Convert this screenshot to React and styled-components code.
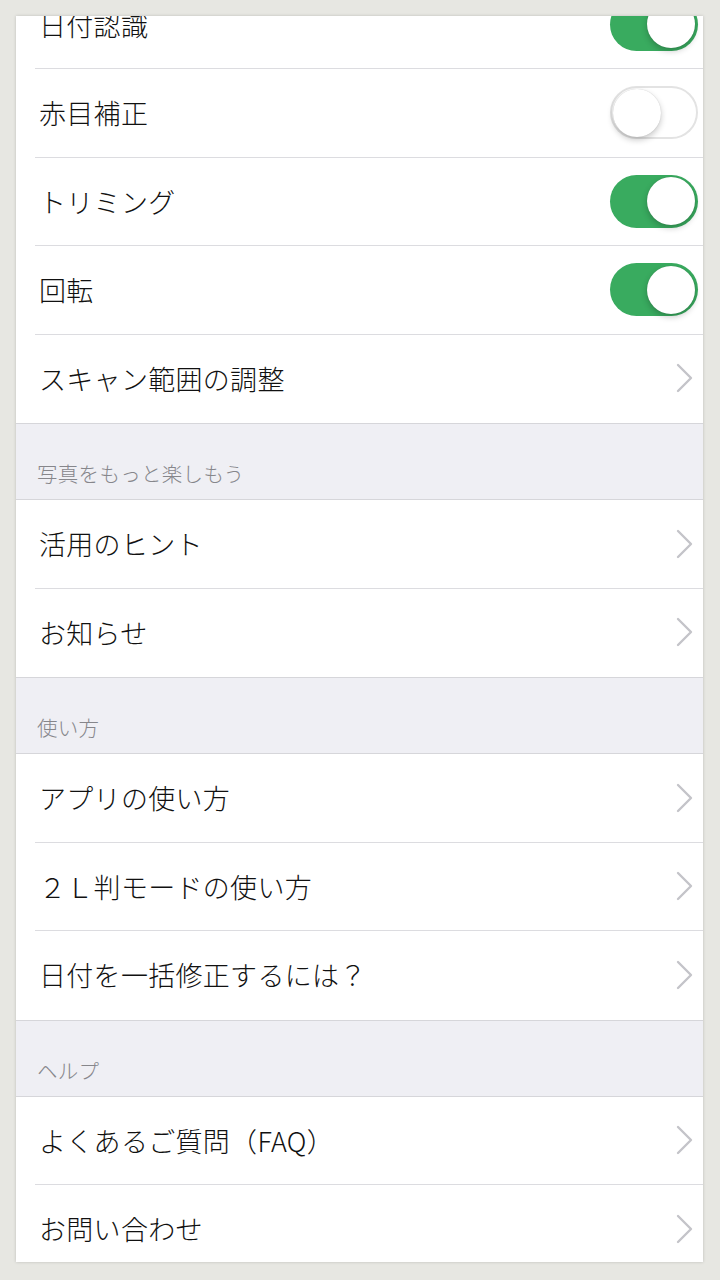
import styled, { createGlobalStyle } from "styled-components";

const GlobalStyle = createGlobalStyle`
    html, body {
        margin: 0;
        padding: 0;
        background: #e7e7e2;
    }
    body {
        font-family: "Noto Sans CJK JP", "Noto Sans", sans-serif;
        -webkit-font-smoothing: antialiased;
    }
`;

const Frame = styled.div`
    box-sizing: border-box;
    width: 720px;
    height: 1280px;
    padding: 16px 17px 18px 16px;
`;

const Panel = styled.div`
    height: 100%;
    overflow: hidden;
    background: #ffffff;
    box-shadow: 0 0 3px rgba(0, 0, 0, 0.18);
`;

const List = styled.div`
    margin-top: -35.5px;
    display: flex;
    flex-direction: column;
`;

const SectionHeader = styled.div`
    box-sizing: border-box;
    height: 77px;
    display: flex;
    align-items: flex-end;
    padding: 0 0 11px 21px;
    background: #efeff4;
    border-top: 1px solid #d6d6da;
    border-bottom: 1px solid #d6d6da;
    color: #86868b;
    font-size: 20.5px;
    font-weight: 300;
    letter-spacing: 0.3px;
`;

const Row = styled.div`
    display: flex;
    padding-left: 19px;
    background: #ffffff;
`;

const RowInner = styled.div`
    box-sizing: border-box;
    flex: 1;
    height: 88.5px;
    display: flex;
    align-items: center;
    justify-content: space-between;
    padding: 0 5px 0 4px;
    border-bottom: 1px solid ${(p) => (p.$last ? "transparent" : "#dcdce0")};
`;

const Label = styled.span`
    font-size: 27px;
    font-weight: 300;
    color: #111111;
    letter-spacing: 0.3px;
`;

const Track = styled.div`
    box-sizing: border-box;
    width: 88px;
    height: 53px;
    border-radius: 27px;
    padding: 2px 3px;
    display: flex;
    align-items: center;
    justify-content: ${(p) => (p.$on ? "flex-end" : "flex-start")};
    background: ${(p) => (p.$on ? "#39ab5f" : "#ffffff")};
    box-shadow: ${(p) => (p.$on ? "none" : "inset 0 0 0 2px #e3e3e3")};
`;

const Knob = styled.div`
    width: 48px;
    height: 48px;
    border-radius: 50%;
    background: #ffffff;
    box-shadow: 0 3px 6px rgba(0, 0, 0, 0.22), 0 0 1px rgba(0, 0, 0, 0.2);
`;

const ChevronBox = styled.svg`
    width: 17px;
    height: 30px;
    margin-right: 5px;
`;

function Toggle({ on })
{
    return (
        <Track $on={on}>
            <Knob />
        </Track>
    );
}

function Chevron()
{
    return (
        <ChevronBox viewBox="0 0 17 30">
            <polyline
                points="2,2 15,15 2,28"
                fill="none"
                stroke="#c4c4c9"
                strokeWidth="2.4"
                strokeLinecap="round"
                strokeLinejoin="round"
            />
        </ChevronBox>
    );
}

const sections = [
    {
        title: null,
        rows: [
            { label: "日付認識", toggle: true },
            { label: "赤目補正", toggle: false },
            { label: "トリミング", toggle: true },
            { label: "回転", toggle: true },
            { label: "スキャン範囲の調整" },
        ],
    },
    {
        title: "写真をもっと楽しもう",
        rows: [{ label: "活用のヒント" }, { label: "お知らせ" }],
    },
    {
        title: "使い方",
        rows: [
            { label: "アプリの使い方" },
            { label: "２Ｌ判モードの使い方" },
            { label: "日付を一括修正するには？" },
        ],
    },
    {
        title: "ヘルプ",
        rows: [{ label: "よくあるご質問（FAQ）" }, { label: "お問い合わせ" }],
    },
];

export default function App()
{
    return (
        <>
            <GlobalStyle />
            <Frame>
                <Panel>
                    <List>
                        {sections.map((section, si) => (
                            <div key={si}>
                                {section.title && <SectionHeader>{section.title}</SectionHeader>}
                                {section.rows.map((row, ri) => (
                                    <Row key={row.label}>
                                        <RowInner $last={ri === section.rows.length - 1}>
                                            <Label>{row.label}</Label>
                                            {row.toggle === undefined
                                                ? <Chevron />
                                                : <Toggle on={row.toggle} />}
                                        </RowInner>
                                    </Row>
                                ))}
                            </div>
                        ))}
                    </List>
                </Panel>
            </Frame>
        </>
    );
}
